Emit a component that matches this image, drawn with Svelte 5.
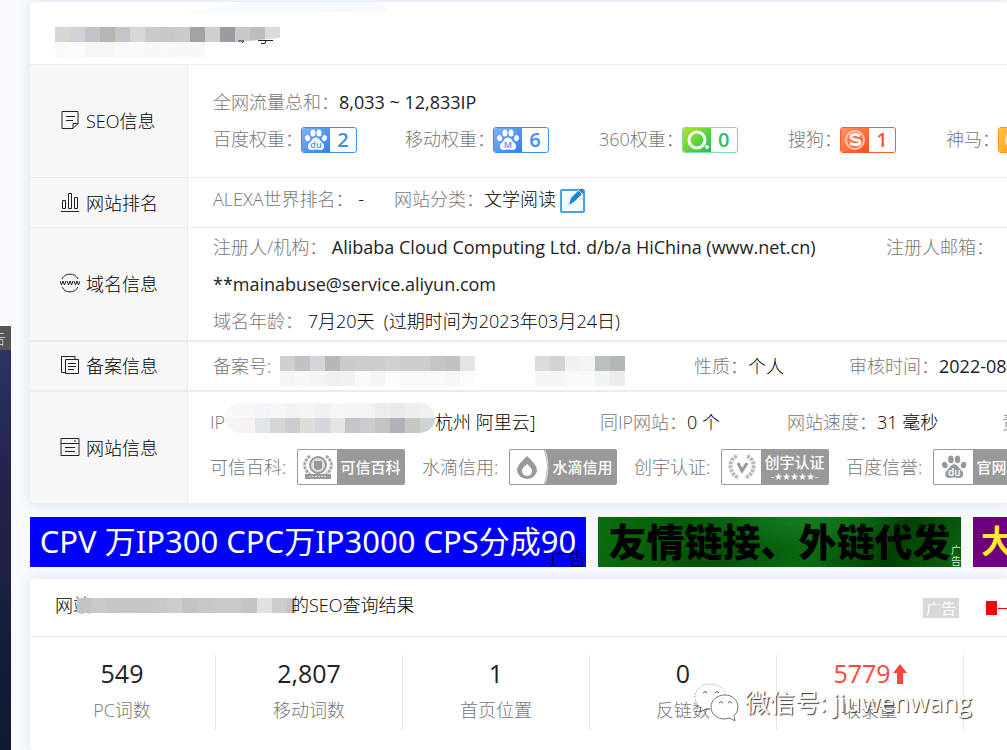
<script>
    const weights = [
        { name: "百度权重：", kind: "baidu", mark: "du", value: 2 },
        { name: "移动权重：", kind: "baidu", mark: "M", value: 6 },
        { name: "360权重：", kind: "so", value: 0 },
        { name: "搜狗：", kind: "sogou", value: 1 },
        { name: "神马：", kind: "sm", value: 0 },
    ];

    const certs = [
        { name: "可信百科:", kind: "baike", text: "可信百科" },
        { name: "水滴信用:", kind: "drop", text: "水滴信用" },
        { name: "创宇认证:", kind: "chuangyu", text: "创宇认证" },
        { name: "百度信誉:", kind: "paw", text: "官网认证" },
    ];

    const stats = [
        { value: "549", name: "PC词数" },
        { value: "2,807", name: "移动词数" },
        { value: "1", name: "首页位置" },
        { value: "0", name: "反链数" },
        { value: "5779", name: "收录量", up: true },
    ];

    // masked values, one colour per block
    const siteMask = [
        "#dad5d1 #cfd2d8 #c4c4c8 #b6b5b1 #c5c4ca #d8d8db #cacaca #c8c8c8 #cbcbc9 #a2a3a5 #cfcfd0 #9b9ca1 #c8c8c9 #bfbcba #d8dce0",
        "#fafafa #fbfbfb #f6f6f6 #f6f6f5 #f9f9f9 #fafafa #f8f8f8 #f8f9f8 #f7f7f7 #f8f8f8",
    ];
    const icpMask = [
        "#d0cfce #c3c1c5 #d6d4d9 #b6b7b6 #c9cbcd #cecccb #cdcdcd #d1d0d1 #cfcdcb #cdcdce #c6c4c6 #c2c1c3 #e4e5e5 none none none none #dbdbdb #d2d3d3 #f0f2f1 #f5f4f2 #bac0be #b2b6b4",
        "#f4f4f4 #f8f8f8 #f5f5f5 #f0f0f0 #f1f1f1 #fafafa #f5f5f5 #fafcfb #f9f9f9 #f9f9f9 #f9f9f9 #f7f7f7 #fbfbfb none none none none #f5f5f5 #f4f4f4 #f9faf9 #fafafa #f2f4f3 #eeeceb",
    ];
    const ipMask = [
        "#f8f8f8 #f9f8f8 #f3f5f8 #f5f7f9 #f2f3f4 #f4f6f6 #f1f1ef #f4f7f6 #f5f4f3 #f5f4f3 #ecedf0 #eaebe9 #eef0ef #eef0f1",
        "#f5f5f5 #f7f2f1 #e0e5e9 #d5d5d6 #cdcbcd #deded9 #d5d6dc #e5e4e2 #c5c5c9 #cccccf #c5c2c2 #b0b2bb #c6c7c0 #ced3d7",
    ];
    const titleMask = [
        "#c3c4c7 #c8cac9 #c6c6c6 #c5c5c6 #c6c6c6 #cbc7c4 #cccdd0 #c4c4c2 #c7c7c7 #c9c9cb #c8c9cb #c4c4c4 #e2e1df #cccdd0 #c5c3c4",
    ];
</script>

{#snippet mask(rows)}
    {#each rows as row, y}
        {#each row.split(" ") as fill, x}
            <rect x={x * 15} y={y * 15} width="15" height="15" {fill} />
        {/each}
    {/each}
{/snippet}

{#snippet paw(mark)}
    <g class="paw">
        <ellipse cx="9" cy="4" rx="2.500" ry="3.500" />
        <ellipse cx="15" cy="4" rx="2.500" ry="3.500" />
        <ellipse cx="3.500" cy="9" rx="2.500" ry="3" transform="rotate(-15 4 9)" />
        <ellipse cx="20.500" cy="9" rx="2.500" ry="3" transform="rotate(15 20 9)" />
        <path d="M12 8.500c-3 0-4 3-6 5-3 2-3 7 1 7.500 2 0 3-.5 5-.5s3 .5 5 .5c4-.5 4-5.500 1-7.500-2-2-3-5-6-5z" />
        <text x="12" y="19" text-anchor="middle">{mark}</text>
    </g>
{/snippet}

{#snippet badge(kind, mark, value)}
    <a class="badge {kind}" href="#rank">
        <span class="badge-icon">
            <svg width="24" height="22" viewBox="0 0 24 22" aria-hidden="true">
                {#if kind === "baidu"}
                    {@render paw(mark)}
                {:else if kind === "so"}
                    <circle cx="12" cy="11" r="8" fill="none" stroke="#fff" stroke-width="3" />
                    <circle cx="22" cy="18" r="2" fill="#fff" />
                {:else if kind === "sogou"}
                    <circle cx="12" cy="11" r="9" fill="none" stroke="#ffc4b0" stroke-width="2" />
                    <path
                        d="M17 7c-3-2-9-2-9 1 0 4 9 2 9 5 0 4-7 3-10 1"
                        fill="none"
                        stroke="#fff"
                        stroke-width="3"
                    />
                {:else}
                    <circle cx="13" cy="11" r="8" fill="none" stroke="#ffe3b0" stroke-width="2" />
                    <circle cx="12" cy="12" r="4" fill="#fff" />
                {/if}
            </svg>
        </span>
        <span class="badge-value">{value}</span>
    </a>
{/snippet}

<div class="page">
    <aside class="side-ad"><span>告</span></aside>

    <main>
        <section class="card">
            <header class="site-head">
                <svg width="360" height="62" viewBox="0 0 360 62" aria-hidden="true">
                    <path d="M150 12c40-6 60-14 90-14h100c10 2 14 6 18 12z" fill="#f9fafc" />
                    <g transform="translate(25 25)">
                        {@render mask(siteMask)}
                        <path d="M180 15l45-4v4z" fill="#fff" />
                    </g>
                    <path d="M208 39h6l-2 2M228 38.500h15M231 41.500h4l1-3" fill="none" stroke="#222" />
                </svg>
            </header>

            <table>
                <tbody>
                    <tr class="tall">
                        <th>
                            <div class="label">
                                <svg width="20" height="20" viewBox="0 0 20 20" aria-hidden="true">
                                    <path d="M2 1.500h16v12l-5 5H2zM18 13.500h-5v5" />
                                    <path d="M6 6.500h9M6 10.500h7" />
                                </svg>
                                SEO信息
                            </div>
                        </th>
                        <td>
                            <div class="line">
                                <span><i>全网流量总和：</i><span class="en">8,033 ~ 12,833IP</span></span>
                            </div>
                            <div class="line weights">
                                {#each weights as w}
                                    <span class="item">
                                        <i>{w.name}</i>{@render badge(w.kind, w.mark, w.value)}
                                    </span>
                                {/each}
                            </div>
                        </td>
                    </tr>
                    <tr class="short">
                        <th>
                            <div class="label">
                                <svg width="20" height="20" viewBox="0 0 20 20" aria-hidden="true">
                                    <path d="M1 19.500h18M2.500 8.500h3v8h-3zM8.500 1.500h3v15h-3zM14.500 5.500h3v11h-3z" />
                                </svg>
                                网站排名
                            </div>
                        </th>
                        <td>
                            <div class="line rank">
                                <span><i>ALEXA世界排名：</i>&nbsp;-</span>
                                <span class="item">
                                    <i>网站分类：</i>文学阅读
                                    <a class="edit" href="#edit" aria-label="编辑">
                                        <svg width="26" height="26" viewBox="0 0 26 26">
                                            <rect x="1" y="3" width="23" height="22" rx="1" fill="#f4faff" stroke="#4ba2e3" stroke-width="2" />
                                            <path d="M9 18l2-7 9-9q3-1 4 3l-9 9z" fill="#1e83d8" />
                                            <path d="M18 3l5 5" stroke="#fff" />
                                        </svg>
                                    </a>
                                </span>
                            </div>
                        </td>
                    </tr>
                    <tr class="domain thick">
                        <th>
                            <div class="label">
                                <svg width="20" height="20" viewBox="0 0 20 20" aria-hidden="true">
                                    <path d="M2 6a9 9 0 0 1 16 0M2 14a9 9 0 0 0 16 0" />
                                    <path d="M0 8l1.500 4 1.500-4 1.500 4L6 8M7 8l1.500 4L10 8l1.500 4L13 8M14 8l1.500 4L17 8l1.500 4L20 8" />
                                </svg>
                                域名信息
                            </div>
                        </th>
                        <td>
                            <div class="line owner">
                                <span>
                                    <i>注册人/机构：</i>
                                    <span class="en">Alibaba Cloud Computing Ltd. d/b/a HiChina (www.net.cn)</span>
                                </span>
                                <span><i>注册人邮箱：</i></span>
                            </div>
                            <div class="line en">**mainabuse@service.aliyun.com</div>
                            <div class="line">
                                <span><i>域名年龄：</i>&nbsp;7月20天&nbsp; (过期时间为2023年03月24日)</span>
                            </div>
                        </td>
                    </tr>
                    <tr class="short thick">
                        <th>
                            <div class="label">
                                <svg width="20" height="20" viewBox="0 0 20 20" aria-hidden="true">
                                    <path d="M5 17.500H1.500v-16H15V4M5.500 4.500h13v14h-13z" />
                                    <path d="M8 8.500h8M8 11.500h8M8 14.500h6" />
                                </svg>
                                备案信息
                            </div>
                        </th>
                        <td>
                            <div class="line icp">
                                <span class="item">
                                    <i>备案号:</i>
                                    <svg class="icp-mask" width="345" height="30" aria-hidden="true">
                                        {@render mask(icpMask)}
                                    </svg>
                                </span>
                                <span><i>性质：</i>个人</span>
                                <span><i>审核时间：</i><span class="en">2022-08-</span></span>
                            </div>
                        </td>
                    </tr>
                    <tr class="last">
                        <th>
                            <div class="label">
                                <svg width="20" height="20" viewBox="0 0 20 20" aria-hidden="true">
                                    <path d="M1 1.500h18v17H1zM1 6.500h18M5 10.500h10M5 14.500h10M14 4h2" />
                                </svg>
                                网站信息
                            </div>
                        </th>
                        <td class="site">
                            <div class="line host">
                                <span class="item">
                                    <i>IP</i>
                                    <svg class="ip-mask" width="210" height="30" aria-hidden="true">
                                        {@render mask(ipMask)}
                                    </svg>
                                    杭州 阿里云]
                                </span>
                                <span><i>同IP网站：</i>0 个</span>
                                <span><i>网站速度：</i>31 毫秒</span>
                                <span><i>责</i></span>
                            </div>
                            <div class="line certs">
                                {#each certs as c}
                                    <span class="item cert-item">
                                        <i>{c.name}</i>
                                        <a class="cert" href="#cert">
                                            <span class="cert-icon">
                                                <svg width="32" height="28" viewBox="0 0 32 28" aria-hidden="true">
                                                    {#if c.kind === "baike"}
                                                        <path d="M8 3C-1 10 3 18 8 21M24 3c9 7 5 15 0 18" fill="none" stroke="#aaa" stroke-width="3" stroke-dasharray="3 1" />
                                                        <circle cx="16" cy="12" r="8" fill="#ddd" stroke="#999" stroke-width="2" />
                                                        <path d="M12 8h8v7q-4 4-8 0z" fill="#999" />
                                                        <path d="M3 21h26v5H3z" fill="#999" />
                                                        <path d="M7 23.500h18" stroke="#ddd" stroke-dasharray="2 1" />
                                                    {:else if c.kind === "drop"}
                                                        <path d="M16 3q10 9 10 14a10 9 0 0 1-20 0q0-5 10-14z" fill="#999" />
                                                        <path d="M16 11q5 4 5 7a5 5 0 0 1-10 0q0-3 5-7z" fill="#fff" />
                                                    {:else if c.kind === "chuangyu"}
                                                        <path d="M11 3C1 7 3 21 13 25M21 3c10 4 8 18-2 22" fill="none" stroke="#bbb" stroke-width="4" stroke-dasharray="3 1" />
                                                        <path d="M12 10l4 8 5-8" fill="none" stroke="#999" stroke-width="3" />
                                                    {:else}
                                                        <g transform="translate(3 2) scale(1.1)">{@render paw("du")}</g>
                                                    {/if}
                                                </svg>
                                            </span>
                                            {#if c.kind === "drop"}
                                                <svg class="curve" width="8" height="34" viewBox="0 0 8 34" aria-hidden="true">
                                                    <path d="M0 0q6 17 0 34z" fill="#fff" />
                                                    <path d="M1 0q6 17 0 34" fill="none" stroke="#ddd" />
                                                </svg>
                                            {/if}
                                            <span class="cert-text">
                                                {c.text}
                                                {#if c.kind === "chuangyu"}
                                                    <small>–★★★★★–</small>
                                                {/if}
                                            </span>
                                        </a>
                                    </span>
                                {/each}
                            </div>
                        </td>
                    </tr>
                </tbody>
            </table>
        </section>

        <div class="banners">
            <a class="banner blue" href="#cpv">CPV 万IP300 CPC万IP3000 CPS分成90<small>广告</small></a>
            <a class="banner green" href="#links">友情链接、外链代发<small>广告</small></a>
            <a class="banner purple" href="#more">大</a>
        </div>

        <section class="card">
            <header class="result-head">
                <h2>
                    网站<svg class="title-mask" width="219" height="15" aria-hidden="true">
                        {@render mask(titleMask)}
                    </svg>的SEO查询结果
                </h2>
                <div class="promo">
                    <span class="ad-tag">广告</span>
                    <a href="#promo" aria-label="广告">
                        <svg width="21" height="14" aria-hidden="true">
                            <path d="M0 0h11v14H0zM12 7h9v1h-9z" fill="#f00" />
                        </svg>
                    </a>
                </div>
            </header>
            <div class="stats">
                {#each stats as s}
                    <div class="stat">
                        <a class="num" class:up={s.up} href="#stat">
                            {s.value}{#if s.up}<svg width="14" height="20" viewBox="0 0 14 20" aria-hidden="true">
                                    <path d="M7 0l7 9h-4v11H4V9H0z" fill="#ff463c" />
                                </svg>{/if}
                        </a>
                        <span class="stat-name">{s.name}</span>
                    </div>
                {/each}
            </div>
        </section>
    </main>

    <div class="watermark">
        <svg width="46" height="40" viewBox="0 0 46 40" aria-hidden="true">
            <path d="M16 2C7 2 1 8 1 15c0 5 3 9 6 10l-1 5 6-3h8l12-13C30 6 24 2 16 2z" fill="#fff" stroke="#bbb" stroke-dasharray="2 1" />
            <path d="M9 11q2-3 4 0M21 11q2-3 4 0M7 25l-1 5 6-3h4" fill="none" stroke="#555" />
            <path d="M31 13c-8 0-14 5-14 12s6 12 14 12l5-1 5 3-1-5q4-4 4-9c0-7-6-12-13-12z" fill="#fff" stroke="#777" />
            <path d="M25 21q2-3 4 0M34 21q2-3 4 0" fill="none" stroke="#555" />
        </svg>
        微信号: jiuwenwang
    </div>
</div>

<style>
    :global(body) {
        background: #f9fafd;
    }

    .page {
        position: relative;
        min-height: 100vh;
        box-sizing: border-box;
        padding: 2px 0 0 30px;
        overflow: hidden;
        font-family: "Open Sans", "Noto Sans CJK SC", sans-serif;
        font-size: 18px;
        font-weight: 300;
        color: #000;
        white-space: nowrap;
    }

    a {
        color: inherit;
        text-decoration: none;
    }

    i {
        font-style: normal;
        color: #777;
    }

    .en {
        font-weight: 400;
        color: #222;
    }

    /* Floating side ad */
    .side-ad {
        position: absolute;
        left: 0;
        top: 326px;
        bottom: 0;
        width: 11px;
        overflow: hidden;
        background: linear-gradient(#30356a, #23244c 35%, #10182f);
    }

    .side-ad span {
        display: flex;
        justify-content: flex-end;
        padding-right: 5px;
        background: #555;
        color: #ddd;
        font-size: 16px;
        line-height: 24px;
    }

    .card {
        background: #fff;
        border-radius: 4px 0 0 4px;
        box-shadow: 0 0 14px #d3e3f2;
    }

    .site-head {
        height: 62px;
        border-bottom: 1px solid #ececec;
    }

    svg {
        display: block;
        flex: none;
    }

    /* Info table */
    table {
        width: 100%;
        table-layout: fixed;
        border-collapse: separate;
        border-spacing: 0;
    }

    th {
        width: 157px;
        padding: 0 0 2px;
        background: #f7f7f7;
        border-right: 1px solid #ececec;
        border-bottom: 1px solid #ececec;
        font-weight: 300;
    }

    td {
        padding: 0 0 0 25px;
        border-bottom: 1px solid #ececec;
        overflow: hidden;
    }

    .tall {
        height: 113px;
    }

    .domain {
        height: 114px;
    }

    .last {
        height: 112px;
    }

    .short {
        height: 50px;
    }

    .thick th,
    .thick td {
        border-bottom-width: 2px;
    }

    .label {
        display: flex;
        align-items: center;
        gap: 6px;
        padding-left: 30px;
    }

    .label svg {
        fill: none;
        stroke: #222;
    }

    .line {
        display: flex;
        align-items: center;
        line-height: 37px;
    }

    .item {
        display: flex;
        align-items: center;
    }

    .weights,
    .owner,
    .icp,
    .host {
        display: grid;
    }

    .weights {
        grid-template-columns: 192px 194px 189px 158px 120px;
    }

    .rank {
        gap: 30px;
        padding-bottom: 6px;
    }

    .edit {
        margin-left: 4px;
    }

    .owner {
        grid-template-columns: 673px auto;
    }

    .icp {
        grid-template-columns: 481px 155px auto;
    }

    .icp-mask {
        margin: 10px 0 0 9px;
    }

    .site {
        padding: 0 0 6px 22px;
    }

    .host {
        grid-template-columns: 390px 187px 215px auto;
        line-height: 45px;
    }

    .ip-mask {
        border-radius: 15px;
        margin-bottom: 8px;
    }

    .certs {
        line-height: 45px;
    }

    .cert-item {
        flex: none;
        width: 212px;
    }

    .cert-item i {
        width: 87px;
    }

    /* Weight badges */
    .badge {
        display: flex;
        box-sizing: border-box;
        width: 56px;
        height: 26px;
        margin-left: -2px;
        border: 1px solid #3a8bff;
        border-radius: 3px;
        overflow: hidden;
        background: #fff;
        color: #3f8cfb;
    }

    .badge-icon {
        display: flex;
        align-items: center;
        justify-content: center;
        width: 28px;
        background: linear-gradient(135deg, #7db2ff, #2d80f8);
    }

    .badge-value {
        flex: 1;
        text-align: center;
        font-size: 20px;
        font-weight: 600;
        line-height: 24px;
    }

    .so {
        border-color: #7fd9a0;
        color: #2ebd62;
    }

    .so .badge-icon {
        background: linear-gradient(135deg, #a7ee1c, #1fbb59);
    }

    .sogou {
        border-color: #ff5a2b;
        color: #ff5430;
    }

    .sogou .badge-icon {
        background: linear-gradient(135deg, #ff9166, #ff4e22);
    }

    .sm {
        border-color: #f59a10;
        color: #f59a10;
    }

    .sm .badge-icon {
        background: linear-gradient(135deg, #ffc04d, #f79a14);
    }

    .paw {
        fill: #fff;
    }

    .paw text {
        fill: #4890fb;
        font-size: 9px;
        font-weight: 600;
    }

    .cert .paw {
        fill: #999;
    }

    .cert .paw text {
        fill: #fff;
    }

    /* Certificates */
    .cert {
        display: flex;
        box-sizing: border-box;
        width: 108px;
        height: 36px;
        border: 1px solid #999;
        border-radius: 2px;
        overflow: hidden;
        background: #999;
        color: #fff;
    }

    .cert-icon {
        display: flex;
        align-items: center;
        justify-content: center;
        width: 39px;
        background: #fff;
    }

    /* the drop badge has a rounded divider over a narrower icon */
    .cert-icon:has(+ .curve) {
        width: 34px;
    }

    .curve {
        margin-right: -3px;
    }

    .cert-text {
        display: flex;
        flex: 1;
        flex-direction: column;
        align-items: center;
        justify-content: center;
        gap: 2px;
        font-size: 15px;
        font-weight: 500;
        line-height: 16px;
    }

    .cert-text small {
        font-size: 8px;
        line-height: 8px;
    }

    /* Banners */
    .banners {
        display: flex;
        gap: 12px;
        margin: 13px 0 12px;
    }

    .banner {
        position: relative;
        display: flex;
        flex: none;
        justify-content: center;
        box-sizing: border-box;
        height: 50px;
        line-height: 48px;
        overflow: hidden;
    }

    .banner small {
        position: absolute;
        right: 0;
        bottom: 0;
        font-size: 18px;
        line-height: 16px;
    }

    .blue {
        width: 556px;
        background: #00f;
        color: #fff;
        font-family: "Noto Sans", "Noto Sans CJK SC", sans-serif;
        font-size: 31px;
        font-weight: 400;
    }

    .blue small {
        color: #001;
    }

    .green {
        width: 363px;
        background:
            radial-gradient(ellipse at 55% 10%, #147a20, transparent 40%),
            linear-gradient(115deg, #0c6e10, #035203 35%, #0a6b10 60%, #024002 80%, #0a6410);
        color: #000;
        font-size: 38px;
        font-weight: 900;
    }

    .green small {
        width: 10px;
        color: #cfe8cf;
        font-size: 10px;
        font-weight: 400;
        line-height: 11px;
        white-space: normal;
    }

    .purple {
        flex: 1;
        justify-content: flex-start;
        padding-left: 8px;
        background: #6e0080;
        color: #ffe92b;
        font-size: 32px;
        font-weight: 700;
    }

    /* SEO result */
    .result-head {
        display: flex;
        justify-content: space-between;
        height: 57px;
        padding-left: 25px;
        border-bottom: 1px solid #ececec;
    }

    h2 {
        display: flex;
        align-items: center;
        margin: 0;
        font-size: 18px;
        font-weight: 300;
        line-height: 53px;
        align-self: flex-start;
    }

    .title-mask {
        margin: 0 -5px 0 -14px;
    }

    .promo {
        display: flex;
        align-items: center;
        gap: 27px;
    }

    .ad-tag {
        width: 36px;
        background: #d8d8d8;
        color: #fff;
        font-size: 15px;
        font-weight: 400;
        line-height: 20px;
        text-align: center;
    }

    .stats {
        display: flex;
        margin-left: -1px;
        padding: 18px 0 20px;
    }

    .stat {
        display: flex;
        flex: none;
        flex-direction: column;
        align-items: center;
        box-sizing: border-box;
        width: 187px;
        height: 75px;
        border-right: 1px solid #e6e6e6;
    }

    .num {
        display: flex;
        align-items: center;
        gap: 2px;
        font-size: 25px;
        font-weight: 400;
        line-height: 37px;
        color: #222;
    }

    .num.up {
        color: #ff463c;
    }

    .stat-name {
        color: #777;
        line-height: 37px;
    }

    .watermark {
        position: absolute;
        left: 694px;
        top: 682px;
        display: flex;
        align-items: center;
        gap: 5px;
        color: #fff;
        font-size: 25px;
        font-weight: 400;
        line-height: 40px;
        text-shadow: 1px 1px 1px #333;
    }
</style>
